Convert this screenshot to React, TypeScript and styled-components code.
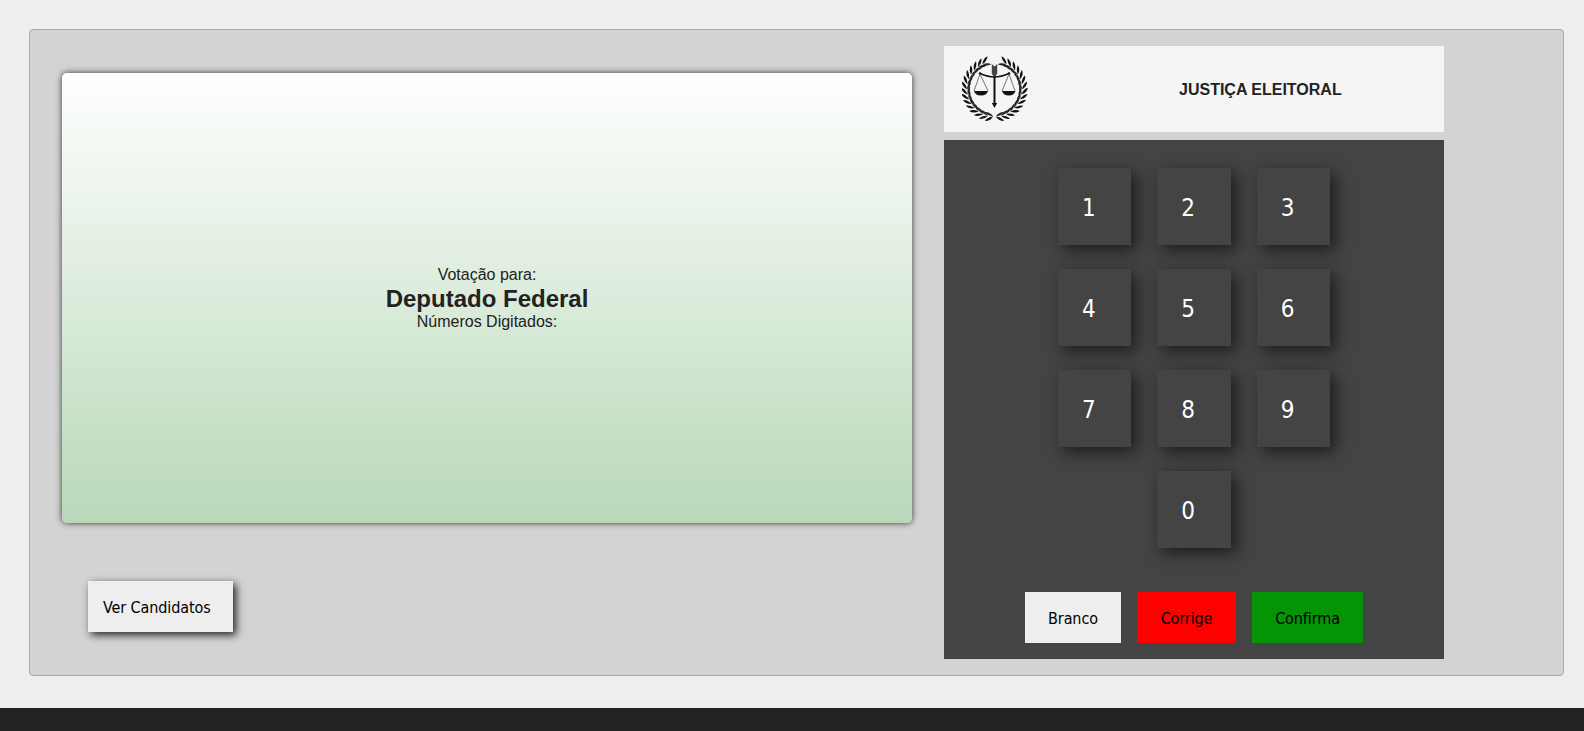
import React from 'react';
import styled, { createGlobalStyle } from 'styled-components';

const TAHOMA_LIKE = `'DejaVu Sans', 'Noto Sans', sans-serif`;

const GlobalStyle = createGlobalStyle`
  html, body {
    margin: 0;
    padding: 0;
    background: #efefef;
    font-family: 'Liberation Sans', Arial, sans-serif;
    color: #222;
  }
`;

const Page = styled.div`
  display: flex;
  flex-direction: column;
  height: 731px;
  overflow: hidden;
`;

const Main = styled.main`
  flex: 1;
  padding: 29px 20px 32px 29px;
`;

const Footer = styled.footer`
  height: 23px;
  background: #222;
`;

const Urna = styled.section`
  display: flex;
  height: 647px;
  box-sizing: border-box;
  padding: 16px;
  background: #d3d3d3;
  border: 1px solid #aaa;
  border-radius: 4px;
`;

const LeftColumn = styled.div`
  display: flex;
  flex-direction: column;
  align-items: flex-start;
  width: 898px;
  padding: 27px 0 0 16px;
  box-sizing: border-box;
`;

const Screen = styled.div`
  display: flex;
  flex-direction: column;
  align-items: center;
  justify-content: center;
  width: 850px;
  height: 450px;
  box-sizing: border-box;
  padding-top: 1px;
  border-radius: 5px;
  background: linear-gradient(#fff, #b8d8b8);
  box-shadow: 0 0 6px #333;
`;

const ScreenLabel = styled.div`
  font-size: 16px;
`;

const ScreenOffice = styled.div`
  margin-top: 1px;
  font-size: 24px;
  line-height: 28px;
  font-weight: bold;
`;

const CandidatesButton = styled.button`
  width: 145px;
  height: 51px;
  margin: 58px 0 0 26px;
  padding: 2px 0 0 15px;
  border: 0;
  text-align: left;
  background: #eee;
  color: #000;
  font-family: ${TAHOMA_LIKE};
  font-stretch: condensed;
  font-size: 16px;
  letter-spacing: -0.1px;
  box-shadow: 3px 3px 8px #222;
`;

const RightColumn = styled.div`
  display: flex;
  flex-direction: column;
  gap: 8px;
  width: 500px;
`;

const Brand = styled.header`
  display: flex;
  align-items: center;
  height: 86px;
  padding-left: 18px;
  background: #f5f5f5;
`;

const BrandTitle = styled.h1`
  margin: 2px 0 0 151px;
  font-size: 16px;
  font-weight: bold;
`;

const Keypad = styled.div`
  display: flex;
  flex-direction: column;
  align-items: center;
  height: 519px;
  box-sizing: border-box;
  padding-top: 28px;
  background: #444;
`;

const Digits = styled.div`
  display: grid;
  grid-template-columns: repeat(3, 73.33px);
  grid-auto-rows: 77px;
  column-gap: 26px;
  row-gap: 24px;
`;

const Digit = styled.button<{ $column?: number }>`
  grid-column: ${(p) => p.$column ?? 'auto'};
  padding: 2px 0 0 24px;
  border: 0;
  text-align: left;
  background: #444;
  color: #fff;
  font-family: ${TAHOMA_LIKE};
  font-stretch: condensed;
  font-size: 24px;
  box-shadow: 5px 5px 15px #1c1c1c;
`;

const Actions = styled.div`
  display: flex;
  gap: 16px;
  margin-top: 44px;
`;

const Action = styled.button<{ $bg: string; $width: number }>`
  width: ${(p) => p.$width}px;
  height: 51px;
  padding: 1px 0 0;
  border: 0;
  background: ${(p) => p.$bg};
  color: #000;
  font-family: ${TAHOMA_LIKE};
  font-stretch: condensed;
  font-size: 16px;
  letter-spacing: -0.1px;
`;

function Logo() {
  const leaves = [];
  for (let i = 0; i < 15; i++) {
    const a = 26 + i * 10.8;
    const rad = (a * Math.PI) / 180;
    for (const side of [1, -1]) {
      const x = 32.5 + side * 27.5 * Math.sin(rad);
      const y = 33 - 27.5 * Math.cos(rad);
      leaves.push(
        <g key={`${i}${side}`} transform={`translate(${x} ${y}) rotate(${side * a}) scale(${side} 1)`}>
          <path d="M0 0Q-3-5-8-5Q-6-1 0 0Z" fill="#111" />
          <path d="M0 0Q-3 4-8 4Q-6 0.5 0 0Z" fill="#222" />
        </g>,
      );
    }
  }
  return (
    <svg width="66" height="66" viewBox="0 0 66 66" aria-hidden="true">
      {leaves}
      <path d="M32.5 19V48" stroke="#111" strokeWidth="2" />
      <path d="M29.8 8l2.7 2.5 2.7-2.5V18l-2.7 3-2.7-3Z" fill="#444" />
      <path d="M29.8 47L32.5 52l2.7-5Z" fill="#111" />
      <path d="M18 17.5Q26 21 32.5 21Q39 21 47 17.5" stroke="#111" strokeWidth="1.5" fill="none" />
      <circle cx="18" cy="17.5" r="1.3" fill="#111" />
      <circle cx="47" cy="17.5" r="1.3" fill="#111" />
      <path d="M18 18L12 35M18 18L26 35M47 18L40 35M47 18L53 35" stroke="#555" strokeWidth="0.8" fill="none" />
      <path d="M12 35H26Q24.5 39.5 19 39.5Q13.5 39.5 12 35ZM40 35H53.5Q52 39.5 46.7 39.5Q41.5 39.5 40 35Z" fill="#111" />
    </svg>
  );
}

const DIGITS = ['1', '2', '3', '4', '5', '6', '7', '8', '9'];

export default function App() {
  return (
    <Page>
      <GlobalStyle />
      <Main>
        <Urna>
          <LeftColumn>
            <Screen>
              <ScreenLabel>Votação para:</ScreenLabel>
              <ScreenOffice>Deputado Federal</ScreenOffice>
              <ScreenLabel>Números Digitados:</ScreenLabel>
            </Screen>
            <CandidatesButton>Ver Candidatos</CandidatesButton>
          </LeftColumn>
          <RightColumn>
            <Brand>
              <Logo />
              <BrandTitle>JUSTIÇA ELEITORAL</BrandTitle>
            </Brand>
            <Keypad>
              <Digits>
                {DIGITS.map((d) => (
                  <Digit key={d}>{d}</Digit>
                ))}
                <Digit $column={2}>0</Digit>
              </Digits>
              <Actions>
                <Action $bg="#eee" $width={96}>Branco</Action>
                <Action $bg="#f00" $width={99}>Corrige</Action>
                <Action $bg="#059405" $width={111}>Confirma</Action>
              </Actions>
            </Keypad>
          </RightColumn>
        </Urna>
      </Main>
      <Footer />
    </Page>
  );
}
